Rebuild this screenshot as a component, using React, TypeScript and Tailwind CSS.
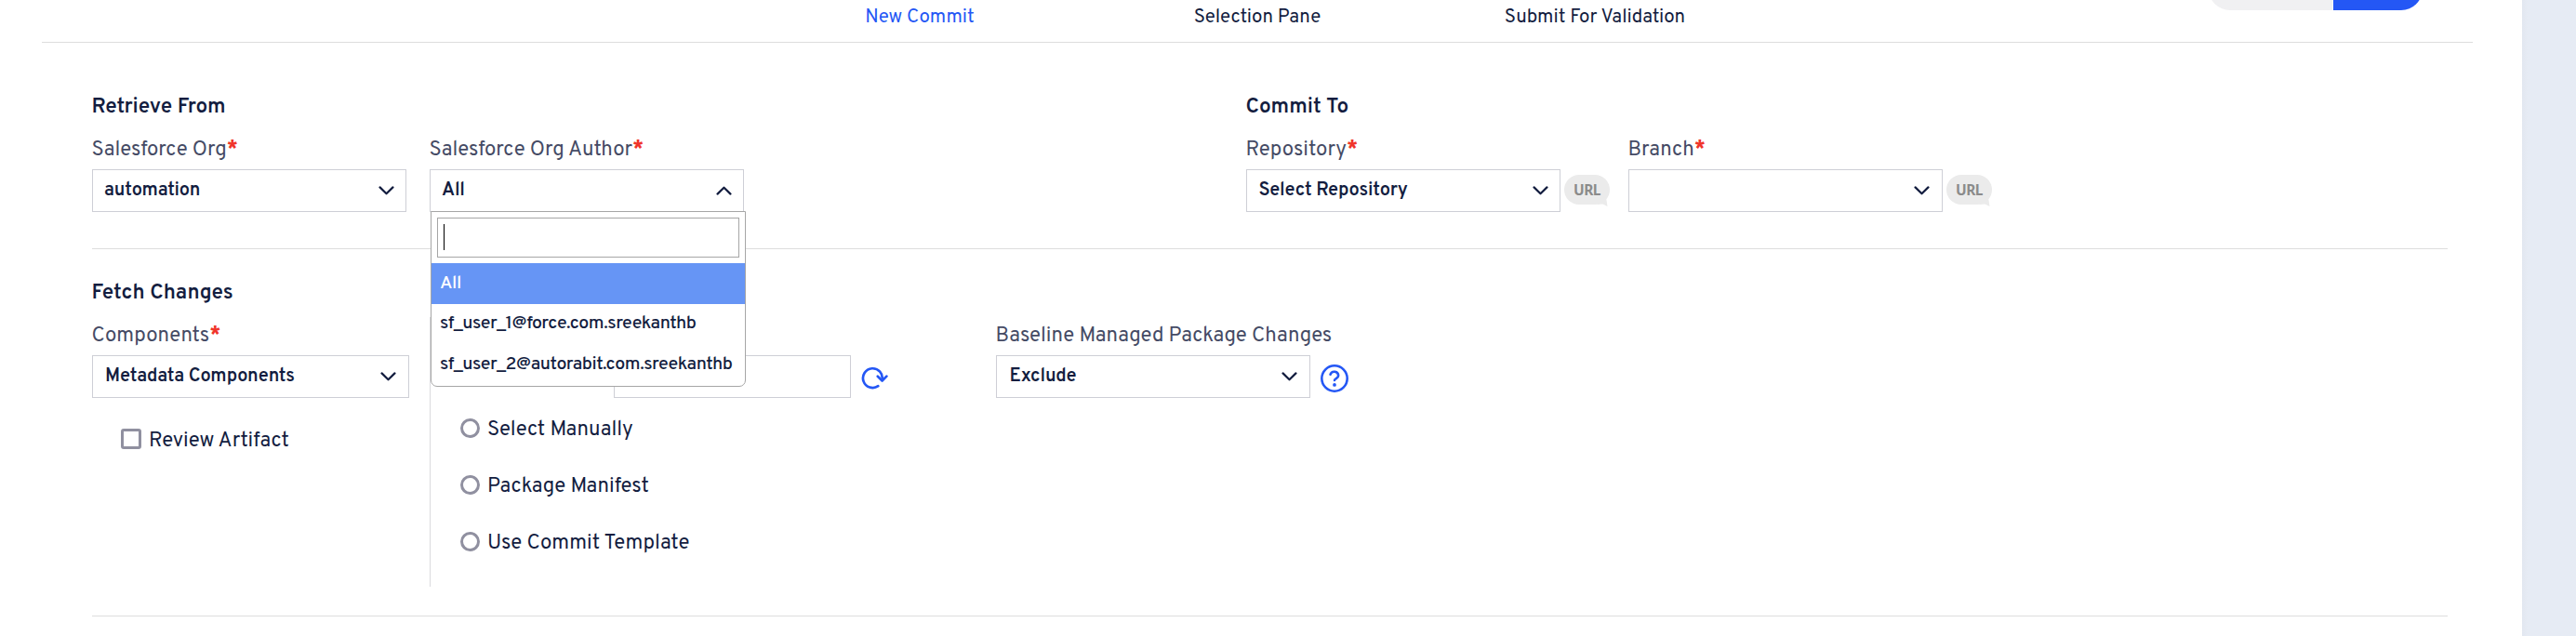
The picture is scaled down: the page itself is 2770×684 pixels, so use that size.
import React from "react";

function Chevron({ up = false }: { up?: boolean }) {
  return (
    <svg
      className={up ? "h-[10px] w-[17px] rotate-180" : "h-[10px] w-[17px]"}
      viewBox="0 0 17 10"
      fill="none"
      stroke="#131d3f"
      strokeWidth="2.2"
      strokeLinecap="round"
      strokeLinejoin="round"
    >
      <path d="M1.5 1.4 8.5 8.3l7-6.9" />
    </svg>
  );
}

function Select({
  value,
  open = false,
  width = "w-[338px]",
  padding = "pl-3 pr-[12px]",
}: {
  value: string;
  open?: boolean;
  width?: string;
  padding?: string;
}) {
  return (
    <div className={`${width} ${padding} flex h-[46px] shrink-0 items-start justify-between border border-[#cecfd6] bg-white`}>
      <span className="pt-[9px] text-[20px] leading-[26px] font-semibold tracking-[-0.17px]">{value}</span>
      <span className="flex pt-[17px]">
        <Chevron up={open} />
      </span>
    </div>
  );
}

function Heading({ children }: { children: React.ReactNode }) {
  return <h2 className="-ml-[0.5px] h-[29px] text-[22.6px] leading-[29px] font-semibold whitespace-nowrap">{children}</h2>;
}

function Label({ children, required = false }: { children: React.ReactNode; required?: boolean }) {
  return (
    <div className="-ml-[0.5px] mt-px mb-[6px] h-[28px] text-[22.2px] leading-[28px] whitespace-nowrap text-[#454b65]">
      {children}
      {required && <span className="font-bold text-[#f0342a]">*</span>}
    </div>
  );
}

function UrlBadge() {
  return (
    <span className="relative mt-[6px] ml-[4px] flex h-[32px] w-[49px] shrink-0 items-center justify-center rounded-[16px] bg-[#ebebeb] pt-[2px] font-['Noto_Sans',sans-serif] text-[15.5px] leading-none font-bold text-[#8b8b8b]">
      <svg className="absolute right-[2px] -bottom-[2px] h-[12px] w-[12px]" viewBox="0 0 12 12" fill="#ebebeb">
        <path d="M0 10 10 2l1.5 10L6.5 9.6z" />
      </svg>
      <span className="relative tracking-[-0.6px]">URL</span>
    </span>
  );
}

function RefreshIcon() {
  return (
    <svg
      className="mt-[12px] ml-[11px] h-[26px] w-[29px] shrink-0"
      viewBox="0 0 29 26"
      fill="none"
      stroke="#2457f5"
      strokeWidth="2.7"
      strokeLinecap="round"
      strokeLinejoin="round"
    >
      <path d="M18.3 21.2A10.4 10.4 0 1 1 22.6 14.6" />
      <path d="M17.8 10.8 22.6 15.5 27.4 10.6" />
    </svg>
  );
}

function HelpIcon() {
  return (
    <svg
      className="mt-[10px] ml-[11px] h-[30px] w-[30px] shrink-0"
      viewBox="1.15 1.15 21.7 21.7"
      fill="none"
      stroke="#2457f5"
      strokeWidth="1.85"
      strokeLinecap="round"
      strokeLinejoin="round"
    >
      <circle cx="12" cy="12" r="9.9" />
      <path d="M8.75 8.9a3.25 3.25 0 0 1 6.3 1c0 2-3.05 2.2-3.05 3.6" />
      <circle cx="12" cy="17" r="1.35" fill="#2457f5" stroke="none" />
    </svg>
  );
}

function Radio({ label }: { label: string }) {
  return (
    <div className="flex h-[61px] items-start">
      <span className="mt-px h-[21px] w-[21px] shrink-0 rounded-full border-[3px] border-[#9090a0]" />
      <span className="ml-[8px] text-[22.2px] leading-[28px] whitespace-nowrap">{label}</span>
    </div>
  );
}

const authors = ["sf_user_1@force.com.sreekanthb", "sf_user_2@autorabit.com.sreekanthb"];

function AuthorMenu() {
  return (
    <div className="absolute top-[45px] left-[1px] z-10 flex w-[339px] flex-col overflow-hidden rounded-b-[7px] border border-[#a6a6a6] bg-white text-[19.6px] font-medium tracking-[-0.45px] whitespace-nowrap">
      <div className="m-[6px] flex h-[43px] items-start border border-[#a6a6a6] bg-white pt-[6px] pl-[6px]">
        <span className="h-[28px] w-px bg-black" />
      </div>
      <div className="h-[44px] bg-[#6695f5] pl-[9px] leading-[46px] text-white">All</div>
      {authors.map((a) => (
        <div key={a} className="h-[44px] pl-[9px] leading-[44px]">
          {a}
        </div>
      ))}
    </div>
  );
}

export default function App() {
  return (
    <div className="flex h-[684px] w-full overflow-hidden bg-white font-['Overpass',Roboto,sans-serif] text-[#131d3f]">
      <main className="flex w-[2712px] shrink-0 flex-col bg-white">
        <header className="mr-[53px] ml-[45px] flex h-[46px] shrink-0 items-start overflow-hidden border-b border-[#dddddd]">
          <nav className="ml-[762.5px] grid w-[1089px] grid-cols-3 pt-[6px] text-center text-[20.5px] leading-[26px]">
            <span className="text-[#2457f5]">New Commit</span>
            <span>Selection Pane</span>
            <span>Submit For Validation</span>
          </nav>
          <div className="-mt-[35px] ml-[478.5px] flex h-[46px] gap-px">
            <span className="w-[133px] rounded-l-[23px] bg-[#f0f0f2]" />
            <span className="w-[96px] rounded-r-[23px] bg-[#2457f5]" />
          </div>
        </header>

        <section className="mr-[80px] ml-[99px] flex h-[222px] shrink-0 border-b border-[#dddddd] pt-[55px]">
          <div className="w-[1241px] shrink-0">
            <Heading>Retrieve From</Heading>
            <div className="mt-[17px] flex">
              <div className="w-[363px] shrink-0">
                <Label required>Salesforce Org</Label>
                <Select value="automation" />
              </div>
              <div>
                <Label required>Salesforce Org Author</Label>
                <div className="relative">
                  <Select value="All" open />
                  <AuthorMenu />
                </div>
              </div>
            </div>
          </div>
          <div>
            <Heading>Commit To</Heading>
            <div className="mt-[17px] flex">
              <div className="w-[411px] shrink-0">
                <Label required>Repository</Label>
                <div className="flex">
                  <Select value="Select Repository" padding="pl-[12.5px] pr-[12px]" />
                  <UrlBadge />
                </div>
              </div>
              <div>
                <Label required>Branch</Label>
                <div className="flex">
                  <Select value="" padding="pl-3 pr-[13px]" />
                  <UrlBadge />
                </div>
              </div>
            </div>
          </div>
        </section>

        <section className="mr-[80px] ml-[99px] h-[395px] shrink-0 border-b border-[#dddddd] pt-[33px]">
          <Heading>Fetch Changes</Heading>
          <div className="mt-[11px] flex h-[290px]">
            <div className="w-[363px] shrink-0 pt-[6px]">
              <Label required>Components</Label>
              <Select value="Metadata Components" width="w-[341px]" padding="pl-[13px] pr-[13px]" />
              <div className="mt-[33px] ml-[31px] flex items-start">
                <span className="h-[22px] w-[22px] shrink-0 rounded-[3px] border-[3px] border-[#9090a0]" />
                <span className="ml-[8px] text-[22.2px] leading-[28px] whitespace-nowrap">Review Artifact</span>
              </div>
            </div>
            <div className="w-[609px] shrink-0 border-l border-[#dadade] pt-[41px]">
              <div className="ml-[197px] flex h-[46px]">
                <span className="h-[46px] w-[255px] shrink-0 border border-[#cecfd6]" />
                <RefreshIcon />
              </div>
              <div className="mt-[21px] ml-[32px] flex flex-col">
                <Radio label="Select Manually" />
                <Radio label="Package Manifest" />
                <Radio label="Use Commit Template" />
              </div>
            </div>
            <div className="pt-[6px]">
              <Label>Baseline Managed Package Changes</Label>
              <div className="flex">
                <Select value="Exclude" padding="pl-[13.5px] pr-[13px]" />
                <HelpIcon />
              </div>
            </div>
          </div>
        </section>
      </main>
      <aside className="flex-1 bg-[linear-gradient(90deg,#e2e7f0,#e6ebf4_6px)]" />
    </div>
  );
}
